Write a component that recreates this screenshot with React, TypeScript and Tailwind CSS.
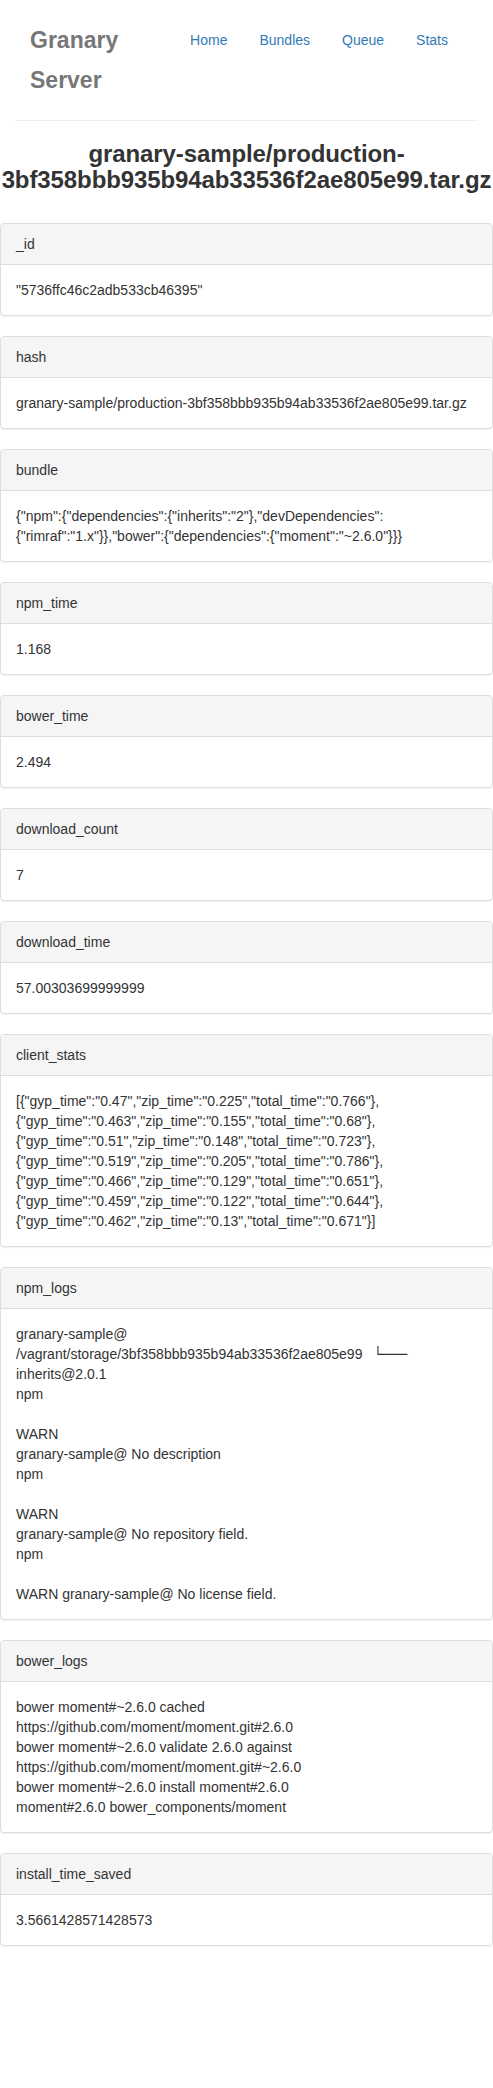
import type { ReactNode } from "react";

type Field = { name: string; lines: ReactNode[] };

const fields: Field[] = [
  { name: "_id", lines: ['"5736ffc46c2adb533cb46395"'] },
  {
    name: "hash",
    lines: ["granary-sample/production-3bf358bbb935b94ab33536f2ae805e99.tar.gz"],
  },
  {
    name: "bundle",
    lines: [
      '{"npm":{"dependencies":{"inherits":"2"},"devDependencies":',
      '{"rimraf":"1.x"}},"bower":{"dependencies":{"moment":"~2.6.0"}}}',
    ],
  },
  { name: "npm_time", lines: ["1.168"] },
  { name: "bower_time", lines: ["2.494"] },
  { name: "download_count", lines: ["7"] },
  { name: "download_time", lines: ["57.00303699999999"] },
  {
    name: "client_stats",
    lines: [
      '[{"gyp_time":"0.47","zip_time":"0.225","total_time":"0.766"},',
      '{"gyp_time":"0.463","zip_time":"0.155","total_time":"0.68"},',
      '{"gyp_time":"0.51","zip_time":"0.148","total_time":"0.723"},',
      '{"gyp_time":"0.519","zip_time":"0.205","total_time":"0.786"},',
      '{"gyp_time":"0.466","zip_time":"0.129","total_time":"0.651"},',
      '{"gyp_time":"0.459","zip_time":"0.122","total_time":"0.644"},',
      '{"gyp_time":"0.462","zip_time":"0.13","total_time":"0.671"}]',
    ],
  },
  {
    name: "npm_logs",
    lines: [
      "granary-sample@",
      <>
        /vagrant/storage/3bf358bbb935b94ab33536f2ae805e99
        <span className="ml-[11px] font-['DejaVu_Sans',sans-serif]">└───</span>
      </>,
      "inherits@2.0.1",
      "npm",
      "",
      "WARN",
      "granary-sample@ No description",
      "npm",
      "",
      "WARN",
      "granary-sample@ No repository field.",
      "npm",
      "",
      "WARN granary-sample@ No license field.",
    ],
  },
  {
    name: "bower_logs",
    lines: [
      "bower moment#~2.6.0 cached",
      "https://github.com/moment/moment.git#2.6.0",
      "bower moment#~2.6.0 validate 2.6.0 against",
      "https://github.com/moment/moment.git#~2.6.0",
      "bower moment#~2.6.0 install moment#2.6.0",
      "moment#2.6.0 bower_components/moment",
    ],
  },
  { name: "install_time_saved", lines: ["3.5661428571428573"] },
];

const navLinks = ["Home", "Bundles", "Queue", "Stats"];

const Panel = ({ field }: { field: Field }) => (
  <div className="mb-5 rounded-[4px] border border-[#ddd] bg-white shadow-[0_1px_1px_rgba(0,0,0,0.05)]">
    <div className="rounded-t-[3px] border-b border-[#ddd] bg-[#f5f5f5] px-[15px] py-[10px]">
      {field.name}
    </div>
    <div className="p-[15px]">
      {field.lines.map((line, i) => (
        <div key={i} className="h-5 whitespace-nowrap">
          {line === "" ? "\u00a0" : line}
        </div>
      ))}
    </div>
  </div>
);

export default function App() {
  return (
    <div className="min-h-[2088px] bg-white font-['Liberation_Sans',Arial,sans-serif] text-[14px] leading-5 text-[#333]">
      <div className="px-[15px]">
        <header className="flex items-start justify-between border-b border-[#eee] px-[15px] pt-5 pb-5">
          <div className="min-w-0 flex-1 text-[23px] font-bold leading-[40px] text-[#777]">
            Granary Server
          </div>
          <ul className="flex">
            {navLinks.map((link, i) => (
              <li key={link} className={i > 0 ? "ml-[2px]" : ""}>
                <a className="block px-[15px] py-[10px] text-[#337ab7]" href="#">
                  {link}
                </a>
              </li>
            ))}
          </ul>
        </header>
      </div>

      <h1 className="mt-5 mb-[29px] text-center text-[24px] font-bold leading-[1.1] tracking-[-0.1px] text-[#333]">
        granary-sample/production-3bf358bbb935b94ab33536f2ae805e99.tar.gz
      </h1>

      <div>
        {fields.map((field) => (
          <Panel key={field.name} field={field} />
        ))}
      </div>
    </div>
  );
}
